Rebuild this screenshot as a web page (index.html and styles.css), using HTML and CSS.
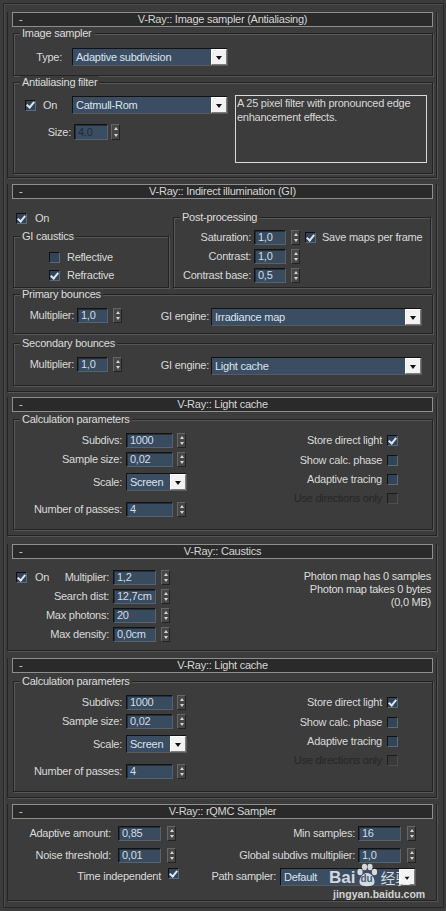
FILE: index.html
```html
<!DOCTYPE html>
<html>
<head>
<meta charset="utf-8">
<link rel="stylesheet" href="styles.css">
</head>
<body>
<div class="panel">

  <section class="rollout r1">
    <div class="rtitle"><span class="minus">-</span><span class="ttext">V-Ray:: Image sampler (Antialiasing)</span></div>
    <div class="group g1">
      <div class="legend">Image sampler</div>
      <div class="row1">
        <span class="lbl lbl-type">Type:</span>
        <div class="sel sel-156"><span class="stext">Adaptive subdivision</span><i class="arr"></i></div>
      </div>
    </div>
    <div class="group g2">
      <div class="legend">Antialiasing filter</div>
      <div class="aa">
        <div class="aa-left">
          <div class="aa-on">
            <i class="cb on"></i><span class="cbl">On</span>
            <div class="sel sel-156"><span class="stext">Catmull-Rom</span><i class="arr"></i></div>
          </div>
          <div class="aa-size">
            <span class="lbl">Size:</span>
            <div class="inp inp-size dis">4.0</div>
            <i class="spin h16"></i>
          </div>
        </div>
        <div class="desc">A 25 pixel filter with pronounced edge enhancement effects.</div>
      </div>
    </div>
  </section>

  <section class="rollout r2">
    <div class="rtitle"><span class="minus">-</span><span class="ttext">V-Ray:: Indirect illumination (GI)</span></div>
    <div class="gi-top">
      <div class="gi-left">
        <div class="gi-on"><i class="cb on"></i><span class="cbl">On</span></div>
        <div class="group g-caus">
          <div class="legend">GI caustics</div>
          <div class="chk-row first"><i class="cb"></i><span class="cbl">Reflective</span></div>
          <div class="chk-row"><i class="cb on"></i><span class="cbl">Refractive</span></div>
        </div>
      </div>
      <div class="group g-post">
        <div class="legend">Post-processing</div>
        <div class="pp-row first">
          <span class="lbl">Saturation:</span><div class="inp">1,0</div><i class="spin"></i>
          <i class="cb on"></i><span class="cbl">Save maps per frame</span>
        </div>
        <div class="pp-row">
          <span class="lbl">Contrast:</span><div class="inp">1,0</div><i class="spin"></i>
        </div>
        <div class="pp-row">
          <span class="lbl">Contrast base:</span><div class="inp">0,5</div><i class="spin"></i>
        </div>
      </div>
    </div>
    <div class="group g-pb">
      <div class="legend">Primary bounces</div>
      <div class="bounce-row">
        <span class="lbl lbl-mult">Multiplier:</span><div class="inp">1,0</div><i class="spin"></i>
        <span class="lbl lbl-eng">GI engine:</span>
        <div class="sel sel-eng"><span class="stext">Irradiance map</span><i class="arr"></i></div>
      </div>
    </div>
    <div class="group g-sb">
      <div class="legend">Secondary bounces</div>
      <div class="bounce-row">
        <span class="lbl lbl-mult">Multiplier:</span><div class="inp">1,0</div><i class="spin"></i>
        <span class="lbl lbl-eng">GI engine:</span>
        <div class="sel sel-eng"><span class="stext">Light cache</span><i class="arr"></i></div>
      </div>
    </div>
  </section>

  <section class="rollout r3">
    <div class="rtitle"><span class="minus">-</span><span class="ttext">V-Ray:: Light cache</span></div>
    <div class="group g-calc">
      <div class="legend">Calculation parameters</div>
      <div class="calc">
        <div class="calc-left">
          <div class="c-row first"><span class="lbl">Subdivs:</span><div class="inp">1000</div><i class="spin"></i></div>
          <div class="c-row"><span class="lbl">Sample size:</span><div class="inp">0,02</div><i class="spin"></i></div>
          <div class="c-row scale"><span class="lbl">Scale:</span><div class="sel sel-scale"><span class="stext">Screen</span><i class="arr"></i></div></div>
          <div class="c-row passes"><span class="lbl">Number of passes:</span><div class="inp">4</div><i class="spin"></i></div>
        </div>
        <div class="calc-right">
          <div class="cr-row"><span class="cbl">Store direct light</span><i class="cb on"></i></div>
          <div class="cr-row"><span class="cbl">Show calc. phase</span><i class="cb"></i></div>
          <div class="cr-row"><span class="cbl">Adaptive tracing</span><i class="cb"></i></div>
          <div class="cr-row disabled"><span class="cbl">Use directions only</span><i class="cb dis"></i></div>
        </div>
      </div>
    </div>
  </section>

  <section class="rollout r4">
    <div class="rtitle"><span class="minus">-</span><span class="ttext">V-Ray:: Caustics</span></div>
    <div class="caus">
      <div class="caus-left">
        <div class="k-row"><span class="lbl on-cell"><span class="onwrap"><i class="cb on"></i><span class="cbl">On</span></span><span>Multiplier:</span></span><div class="inp">1,2</div><i class="spin"></i></div>
        <div class="k-row"><span class="lbl">Search dist:</span><div class="inp">12,7cm</div><i class="spin"></i></div>
        <div class="k-row"><span class="lbl">Max photons:</span><div class="inp">20</div><i class="spin"></i></div>
        <div class="k-row"><span class="lbl">Max density:</span><div class="inp">0,0cm</div><i class="spin"></i></div>
      </div>
      <div class="caus-right">
        <div>Photon map has 0 samples</div>
        <div>Photon map takes 0 bytes</div>
        <div>(0,0 MB)</div>
      </div>
    </div>
  </section>

  <section class="rollout r5">
    <div class="rtitle"><span class="minus">-</span><span class="ttext">V-Ray:: Light cache</span></div>
    <div class="group g-calc">
      <div class="legend">Calculation parameters</div>
      <div class="calc">
        <div class="calc-left">
          <div class="c-row first"><span class="lbl">Subdivs:</span><div class="inp">1000</div><i class="spin"></i></div>
          <div class="c-row"><span class="lbl">Sample size:</span><div class="inp">0,02</div><i class="spin"></i></div>
          <div class="c-row scale"><span class="lbl">Scale:</span><div class="sel sel-scale"><span class="stext">Screen</span><i class="arr"></i></div></div>
          <div class="c-row passes"><span class="lbl">Number of passes:</span><div class="inp">4</div><i class="spin"></i></div>
        </div>
        <div class="calc-right">
          <div class="cr-row"><span class="cbl">Store direct light</span><i class="cb on"></i></div>
          <div class="cr-row"><span class="cbl">Show calc. phase</span><i class="cb"></i></div>
          <div class="cr-row"><span class="cbl">Adaptive tracing</span><i class="cb"></i></div>
          <div class="cr-row disabled"><span class="cbl">Use directions only</span><i class="cb dis"></i></div>
        </div>
      </div>
    </div>
  </section>

  <section class="rollout r6">
    <div class="rtitle"><span class="minus">-</span><span class="ttext">V-Ray:: rQMC Sampler</span></div>
    <div class="q-row first">
      <span class="lbl ql">Adaptive amount:</span><div class="inp q">0,85</div><i class="spin q"></i>
      <span class="lbl qr">Min samples:</span><div class="inp qri">16</div><i class="spin q"></i>
    </div>
    <div class="q-row">
      <span class="lbl ql">Noise threshold:</span><div class="inp q">0,01</div><i class="spin q"></i>
      <span class="lbl qr">Global subdivs multiplier:</span><div class="inp qri">1,0</div><i class="spin q"></i>
    </div>
    <div class="q-row third">
      <span class="lbl ql3">Time independent</span><i class="cb on"></i>
      <span class="lbl qr3">Path sampler:</span>
      <div class="sel sel-path"><span class="stext">Default</span><i class="arr"></i></div>
    </div>
  </section>

  <div class="wm">
    <div class="wm-logo"><span class="wm-bai">Bai</span><span class="wm-paw"><svg class="paw" viewBox="0 0 22 24" width="22" height="24"><ellipse cx="4" cy="9" rx="2.6" ry="3.2"/><ellipse cx="8.5" cy="4" rx="2.6" ry="3.2"/><ellipse cx="14" cy="4" rx="2.6" ry="3.2"/><ellipse cx="18.5" cy="9" rx="2.6" ry="3.2"/><path d="M11 10 C6 10 2 17 4 21 C6 24 16 24 18 21 C20 17 16 10 11 10Z"/></svg><span class="wm-du">du</span></span><span class="wm-jy">经验</span></div>
    <div class="wm-url">jingyan.baidu.com</div>
  </div>
</div>
</body>
</html>
```

FILE: styles.css
```css
* { box-sizing: border-box; }
html, body { margin: 0; padding: 0; }
body {
  background: #3c3c3c;
  width: 446px;
  height: 911px;
  overflow: hidden;
  font-family: "Liberation Sans", Arial, sans-serif;
  font-size: 11px;
  letter-spacing: -0.25px;
  color: #d9d9d9;
}
.panel {
  position: relative;
  margin: 3px 0 0 3px;
  width: 441px;
  border: 1px solid #262626;
  box-shadow: inset 1px 1px 0 #4c4c4c;
  padding: 8px 6px 6px 3px;
}
.rollout {
  width: 430px;
  border: 1px solid #232323;
  border-top: none;
  box-shadow: 1px 1px 0 #545454;
}
.r1 { padding-bottom: 3px; margin-bottom: 6px; }
.r2 { padding-bottom: 5px; margin-bottom: 5px; }
.r3 { padding-bottom: 5px; margin-bottom: 8px; }
.r4 { margin-bottom: 7px; }
.r5 { padding-bottom: 5px; margin-bottom: 6px; }
.r6 { padding-bottom: 14px; }

.rtitle {
  display: flex;
  height: 15px;
  width: 421px;
  margin-left: 4px;
  border: 1px solid #8e8e8e;
  background: #2a2a2a;
  line-height: 13px;
  color: #d6d6d6;
}
.rtitle .minus { width: 22px; padding-left: 6px; }
.rtitle .ttext { flex: 1; text-align: center; }
.rtitle::after { content: ""; width: 22px; }

.group {
  margin-left: 5px;
  width: 420px;
  border: 1px solid #232323;
  box-shadow: 1px 1px 0 #575757, inset 1px 1px 0 #575757;
}
.legend {
  width: fit-content;
  height: 12px;
  line-height: 12px;
  margin: -7px 0 0 6px;
  padding: 0 2px;
  background: #3c3c3c;
  color: #dcdcdc;
}
.lbl { display: block; white-space: nowrap; flex: none; }

/* inputs */
.inp {
  flex: none;
  height: 15px;
  background: #384b5f;
  border: 1px solid;
  border-color: #121212 #56636f #56636f #121212;
  box-shadow: inset 1px 1px 0 #22303d;
  color: #d2dde8;
  line-height: 13px;
  padding-left: 3px;
  white-space: nowrap;
}
.inp.dis { color: #1f2b37; background: #3a4d62; }
.spin {
  flex: none;
  display: flex;
  flex-direction: column;
  justify-content: space-around;
  align-items: center;
  width: 9px;
  height: 15px;
  background: #474747;
  border: 1px solid;
  border-color: #666 #222 #222 #666;
}
.spin.h16 { height: 16px; }
.spin::before {
  content: "";
  border-left: 2.5px solid transparent;
  border-right: 2.5px solid transparent;
  border-bottom: 3px solid #d4d4d4;
}
.spin::after {
  content: "";
  border-left: 2.5px solid transparent;
  border-right: 2.5px solid transparent;
  border-top: 3px solid #d4d4d4;
}
.sel {
  flex: none;
  display: flex;
  height: 18px;
  background: #3a4d62;
  border: 1px solid;
  border-color: #121212 #5a5a5a #5a5a5a #121212;
}
.sel .stext {
  flex: 1;
  padding-left: 3px;
  line-height: 16px;
  color: #dbe3ec;
  white-space: nowrap;
  overflow: hidden;
}
.sel .arr {
  flex: none;
  width: 16px;
  height: 16px;
  background: #f2f2f2;
  border: 1px solid;
  border-color: #ffffff #7c7c7c #7c7c7c #ffffff;
  display: flex;
  align-items: center;
  justify-content: center;
}
.sel .arr::before {
  content: "";
  margin-top: 1px;
  border-left: 3.5px solid transparent;
  border-right: 3.5px solid transparent;
  border-top: 4px solid #111;
}
.cb {
  flex: none;
  display: flex;
  align-items: center;
  justify-content: center;
  width: 11px;
  height: 11px;
  background: #30455a;
  border: 1px solid;
  border-color: #111 #5d6b78 #5d6b78 #111;
}
.cb.on::after {
  content: "";
  width: 3px;
  height: 6px;
  margin-top: -2px;
  border: solid #dde7f1;
  border-width: 0 2px 2px 0;
  transform: rotate(40deg);
}
.cb.dis { background: #393939; border-color: #1c1c1c #4e4e4e #4e4e4e #1c1c1c; }
.cbl { white-space: nowrap; }

/* rollout 1 */
.g1 { margin-top: 6px; padding-bottom: 9px; }
.row1 { display: flex; margin-top: 9px; height: 18px; }
.lbl-type { width: 48px; text-align: right; line-height: 18px; margin-right: 10px; }
.sel-156 { width: 156px; }
.g2 { margin-top: 6px; padding-bottom: 10px; }
.aa { display: flex; margin-top: 7px; }
.aa-left { width: 221px; padding-top: 1px; }
.aa-on { display: flex; align-items: center; height: 18px; }
.aa-on .cb { margin-left: 11px; }
.aa-on .cbl { margin-left: 7px; width: 29px; line-height: 18px; }
.aa-size { display: flex; margin-top: 10px; height: 16px; }
.aa-size .lbl { width: 57px; text-align: right; line-height: 16px; }
.inp-size { margin-left: 3px; width: 34px; height: 16px; line-height: 14px; }
.aa-size .spin { margin-left: 3px; }
.desc {
  width: 192px;
  height: 68px;
  border: 1px solid #dadada;
  padding: 0 2px 0 1px;
  line-height: 14px;
  color: #d8d8d8;
}

/* rollout 2 */
.gi-top { display: flex; align-items: flex-start; }
.gi-left { width: 156px; margin-left: 5px; }
.gi-on { display: flex; align-items: center; height: 11px; margin-top: 14px; padding-left: 3px; }
.gi-on .cbl { margin-left: 8px; line-height: 11px; }
.g-caus { margin: 12px 0 0 0; width: 156px; padding-bottom: 6px; }
.chk-row { display: flex; align-items: center; height: 11px; padding-left: 35px; margin-top: 7px; }
.chk-row.first { margin-top: 10px; }
.chk-row .cbl { margin-left: 7px; line-height: 11px; }
.g-post { margin: 18px 0 0 4px; width: 258px; padding-bottom: 4px; }
.pp-row { display: flex; align-items: center; height: 15px; margin-top: 4px; }
.pp-row.first { margin-top: 7px; }
.pp-row .lbl { width: 77px; text-align: right; line-height: 15px; }
.pp-row .inp { margin-left: 3px; width: 32px; }
.pp-row .spin { margin-left: 5px; }
.pp-row .cb { margin-left: 5px; }
.pp-row .cbl { margin-left: 6px; line-height: 15px; }
.g-pb { margin-top: 6px; padding-bottom: 7px; }
.g-sb { margin-top: 9px; padding-bottom: 10px; }
.bounce-row { display: flex; align-items: flex-start; margin-top: 8px; height: 18px; }
.bounce-row .lbl-mult { width: 60px; text-align: right; line-height: 15px; }
.bounce-row .inp { margin-left: 3px; width: 31px; }
.bounce-row .spin { margin-left: 5px; }
.bounce-row .lbl-eng { margin-left: 38px; width: 49px; text-align: right; line-height: 16px; }
.sel-eng { margin-left: 2px; width: 211px; }

/* light cache */
.g-calc { margin-top: 7px; padding-bottom: 12px; }
.r5 .g-calc { margin-top: 8px; }
.calc { display: flex; justify-content: space-between; }
.c-row { display: flex; align-items: flex-start; height: 15px; margin-top: 4px; }
.c-row.first { margin-top: 8px; }
.c-row.scale { height: 18px; margin-top: 6px; }
.c-row.passes { margin-top: 11px; }
.c-row .lbl { width: 108px; text-align: right; line-height: 15px; }
.c-row.scale .lbl { line-height: 18px; }
.c-row .inp { margin-left: 4px; width: 47px; }
.c-row .spin { margin-left: 4px; }
.sel-scale { margin-left: 4px; width: 61px; }
.calc-right { display: flex; flex-direction: column; align-items: flex-end; padding: 10px 34px 0 0; }
.cr-row { display: flex; align-items: center; height: 11px; margin-top: 8px; }
.cr-row:first-child { margin-top: 0; }
.cr-row:nth-child(2) { margin-top: 9px; }
.cr-row .cbl { margin-right: 5px; line-height: 11px; }
.cr-row.disabled .cbl { color: #262626; }

/* caustics */
.caus { display: flex; justify-content: space-between; padding: 11px 5px 8px 0; }
.k-row { display: flex; align-items: center; height: 15px; margin-top: 4px; }
.k-row:first-child { margin-top: 0; }
.k-row .lbl { width: 101px; text-align: right; line-height: 15px; }
.k-row .on-cell { display: flex; justify-content: space-between; align-items: center; padding-left: 8px; }
.onwrap { display: flex; align-items: center; }
.onwrap .cbl { margin-left: 8px; }
.k-row .inp { margin-left: 4px; width: 43px; }
.k-row .spin { margin-left: 5px; }
.caus-right { text-align: right; line-height: 13px; color: #dcdcdc; }

/* rQMC */
.q-row { display: flex; align-items: flex-start; height: 15px; margin-top: 7px; }
.q-row.third { height: 19px; margin-top: 4px; }
.q-row .ql { width: 103px; text-align: right; line-height: 15px; }
.q-row .inp.q { margin-left: 7px; width: 43px; }
.q-row .spin.q { margin-left: 6px; }
.q-row .qr { width: 179px; text-align: right; line-height: 15px; }
.q-row .qri { margin-left: 3px; width: 43px; }
.q-row .ql3 { width: 153px; text-align: right; line-height: 19px; }
.q-row.third .cb { margin: 1px 0 0 7px; }
.q-row .qr3 { width: 97px; text-align: right; line-height: 19px; }
.sel-path { margin: 1px 0 0 4px; width: 136px; }

/* watermark overlay */
.wm {
  position: absolute;
  left: 325px;
  top: 857px;
  color: rgba(255, 255, 255, 0.78);
  letter-spacing: 0;
  pointer-events: none;
}
.wm-logo { display: flex; align-items: flex-end; height: 26px; }
.wm-bai { font-weight: bold; font-size: 17px; line-height: 18px; }
.wm-paw { position: relative; width: 22px; height: 24px; margin-left: 1px; }
.paw { fill: rgba(255, 255, 255, 0.8); }
.wm-du {
  position: absolute;
  left: 4px;
  top: 10px;
  font-size: 10px;
  font-weight: bold;
  color: #4a5d72;
  line-height: 12px;
}
.wm-jy {
  font-family: "Noto Sans CJK SC", sans-serif;
  font-size: 15px;
  line-height: 18px;
  margin-left: 2px;
}
.wm-url {
  font-size: 10.5px;
  font-weight: bold;
  line-height: 12px;
  margin-top: 1px;
  padding-left: 4px;
}
```
